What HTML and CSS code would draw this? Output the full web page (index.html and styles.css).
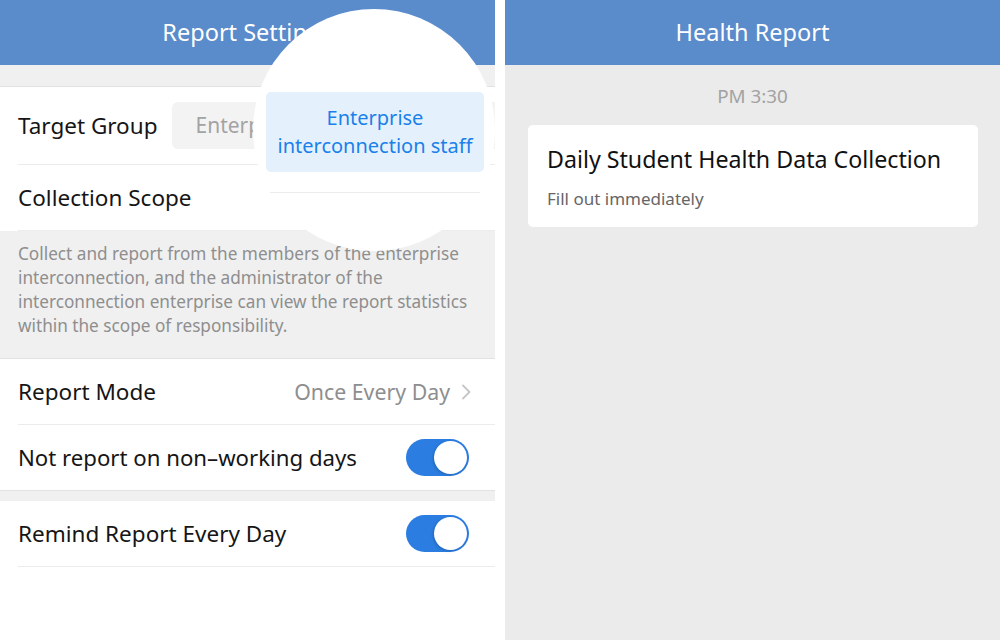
FILE: index.html
```html
<!DOCTYPE html>
<html lang="en">
<head>
    <meta charset="UTF-8">
    <meta name="viewport" content="width=device-width, initial-scale=1.0">
    <title>Report Settings / Health Report</title>
    <link rel="stylesheet" href="styles.css">
</head>
<body>
    <div class="screen settings">
        <div class="navbar">Report Settings</div>
        <div class="band"></div>

        <div class="group">
            <div class="row row-target">
                <span class="label">Target Group</span>
                <div class="select"><span class="select-text">Enterprise interconnection staff</span></div>
            </div>
            <div class="row">
                <span class="label">Collection Scope</span>
            </div>
        </div>

        <div class="note">
            Collect and report from the members of the enterprise<br>
            interconnection, and the administrator of the<br>
            interconnection enterprise can view the report statistics<br>
            within the scope of responsibility.
        </div>

        <div class="group">
            <div class="row">
                <span class="label">Report Mode</span>
                <span class="value">Once Every Day
                    <svg class="chevron" width="10" height="16" viewBox="0 0 10 16">
                        <polyline points="2,1.5 8.5,8 2,14.5" fill="none" stroke="#c6c6c6" stroke-width="1.8" stroke-linecap="round" stroke-linejoin="round"/>
                    </svg>
                </span>
            </div>
            <div class="row last">
                <span class="label narrow">Not report on non&ndash;working days</span>
                <span class="switch on"><span class="knob"></span></span>
            </div>
        </div>

        <div class="gap"></div>

        <div class="group">
            <div class="row">
                <span class="label">Remind Report Every Day</span>
                <span class="switch on"><span class="knob"></span></span>
            </div>
        </div>

        <!-- magnified picker option -->
        <div class="loupe">
            <div class="option">
                <div>Enterprise</div>
                <div>interconnection staff</div>
            </div>
            <div class="loupe-line"></div>
        </div>
    </div>

    <div class="screen chat">
        <div class="navbar">Health Report</div>
        <div class="time">PM 3:30</div>
        <div class="card">
            <div class="card-title">Daily Student Health Data Collection</div>
            <div class="card-sub">Fill out immediately</div>
        </div>
    </div>
</body>
</html>
```

FILE: styles.css
```css
body {
    margin: 0;
    padding: 0;
    background: #ffffff;
    font-family: "Noto Sans", "Liberation Sans", Arial, sans-serif;
    display: flex;
    gap: 10px;
    height: 640px;
    overflow: hidden;
}

.screen {
    width: 495px;
    height: 640px;
    position: relative;
    overflow: hidden;
}

.settings {
    background: #ffffff;
}

.chat {
    background: #ebebeb;
}

.navbar {
    height: 65px;
    line-height: 65px;
    background: #5a8bcb;
    color: #ffffff;
    text-align: center;
    font-size: 23.5px;
}

.band {
    height: 21px;
    background: #f0f0f0;
    border-bottom: 1px solid #e2e2e2;
}

.gap {
    height: 10px;
    background: #f0f0f0;
    border-top: 1px solid #e2e2e2;
}

.group {
    padding-left: 18px;
    background: #ffffff;
}

.row {
    height: 65px;
    display: flex;
    align-items: center;
    justify-content: space-between;
    padding-right: 26px;
    border-bottom: 1px solid #ececec;
}

.row.last {
    border-bottom: none;
}

.row-target {
    height: 77px;
    justify-content: flex-start;
    padding-right: 0;
}

.label {
    font-size: 22.5px;
    line-height: 30px;
    color: #151515;
}

.label.narrow {
    font-size: 22.2px;
}

.select {
    margin-left: 15px;
    flex: 1;
    height: 47px;
    line-height: 47px;
    background: #f3f3f3;
    border-radius: 6px 0 0 6px;
    padding-left: 23px;
    color: #a3a3a3;
    font-size: 21px;
    white-space: nowrap;
}

/* text runs under the loupe, so it is clipped just past its edge */
.select-text {
    display: block;
    width: 80px;
    overflow: hidden;
}

.note {
    background: #f0f0f0;
    border-bottom: 1px solid #e2e2e2;
    padding: 11px 18px 20px;
    font-size: 17.2px;
    line-height: 24px;
    color: #8e8e8e;
    white-space: nowrap;
}

.value {
    display: flex;
    align-items: center;
    gap: 11px;
    font-size: 21.3px;
    color: #8e8e8e;
}

.chevron {
    margin-right: -2px;
}

.switch {
    width: 63px;
    height: 37px;
    border-radius: 19px;
    background: #2b7de1;
    position: relative;
}

.switch .knob {
    position: absolute;
    top: 2px;
    right: 2px;
    width: 33px;
    height: 33px;
    border-radius: 50%;
    background: #ffffff;
    box-shadow: -1px 1px 3px rgba(0, 0, 0, 0.18);
}

.loupe {
    position: absolute;
    left: 253px;
    top: 9px;
    width: 242px;
    height: 242px;
    border-radius: 50%;
    background: #ffffff;
}

.option {
    position: absolute;
    left: 13px;
    top: 83px;
    width: 218px;
    height: 80px;
    box-sizing: border-box;
    padding-top: 12px;
    background: #e4f1fd;
    border-radius: 5px;
    color: #1a80ea;
    font-size: 20px;
    line-height: 28px;
    text-align: center;
}

.loupe-line {
    position: absolute;
    left: 17px;
    top: 183px;
    width: 210px;
    height: 1px;
    background: #ececec;
}

.time {
    margin-top: 19px;
    text-align: center;
    font-size: 18.8px;
    line-height: 24px;
    color: #a2a2a2;
}

.card {
    margin: 17px 22px 0 23px;
    background: #ffffff;
    border-radius: 5px;
    padding: 19px 19px 17px;
}

.card-title {
    font-size: 23.2px;
    line-height: 30px;
    color: #111111;
}

.card-sub {
    margin-top: 14px;
    font-size: 17px;
    line-height: 22px;
    color: #666666;
}
```
